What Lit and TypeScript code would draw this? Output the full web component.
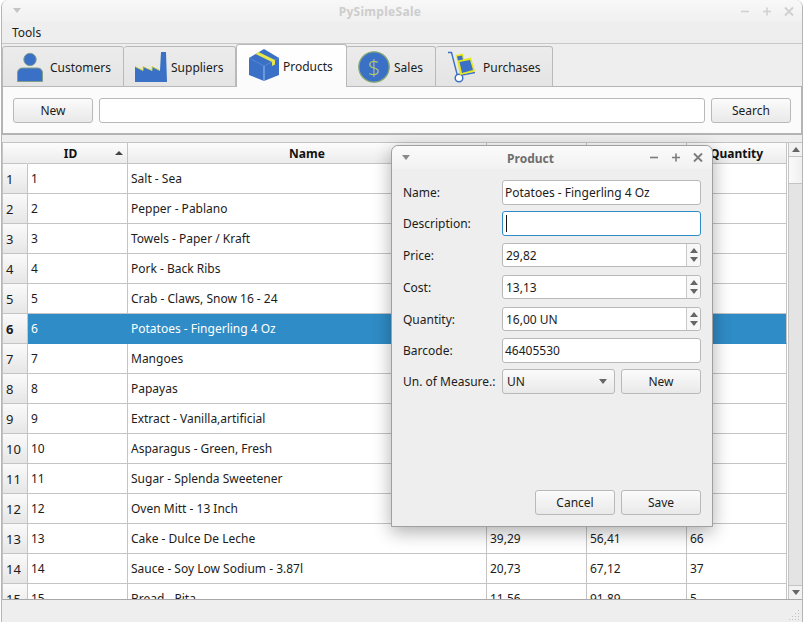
import { LitElement, html, css, svg } from "lit";
import { customElement } from "lit/decorators.js";

const names = [
  "Salt - Sea", "Pepper - Pablano", "Towels - Paper / Kraft", "Pork - Back Ribs",
  "Crab - Claws, Snow 16 - 24", "Potatoes - Fingerling 4 Oz", "Mangoes", "Papayas",
  "Extract - Vanilla,artificial", "Asparagus - Green, Fresh", "Sugar - Splenda Sweetener",
  "Oven Mitt - 13 Inch", "Cake - Dulce De Leche", "Sauce - Soy Low Sodium - 3.87l", "Bread - Pita",
];
const nums: Record<number, string[]> = {
  13: ["39,29", "56,41", "66"],
  14: ["20,73", "67,12", "37"],
  15: ["11,56", "91,89", "5"],
};

const icons = {
  customers: svg`<svg class="ic" width="32" height="32" viewBox="0 0 32 32">
    <circle cx="16" cy="8.5" r="6.2" fill="#3a70c6" stroke="#7f9f8a" stroke-width="1"/>
    <path d="M3.5 30.5V22c0-3 2-5 5-5h15c3 0 5 2 5 5v8.5z" fill="#3a70c6" stroke="#7f9f8a" stroke-width="1"/></svg>`,
  suppliers: svg`<svg class="ic" width="32" height="32" viewBox="0 0 32 32">
    <path d="M0 15.5L8 19.5V15.5L17 19.5V15.5L25 19.5L26 1H31L32 31H0z" fill="#3a70c6"/>
    <path d="M0 15.5L8 19.5V15.5L17 19.5V15.5L25 19.5" fill="none" stroke="#d6dc4a" stroke-width="1"/></svg>`,
  products: svg`<svg class="ic" width="32" height="32" viewBox="0 0 32 32">
    <path d="M16 0L31 9V26L16 32L1 26V9z" fill="#3a70c6"/>
    <path d="M16 17V32" stroke="#8fb2e6" stroke-width="1.2"/>
    <path d="M1 9L16 17L31 9" fill="none" stroke="#5f8ad6" stroke-width=".8"/>
    <path d="M7.5 5L10.5 3L27 11V15.5L24 17V13z" fill="#e7e64c"/></svg>`,
  sales: svg`<svg class="ic" width="32" height="32" viewBox="0 0 32 32">
    <circle cx="16" cy="16" r="15.2" fill="#3a70c6" stroke="#86a974" stroke-width="1.3"/>
    <text x="16" y="24" text-anchor="middle" font-family="Open Sans, sans-serif" font-size="22" font-weight="300" fill="#b8d45a">$</text></svg>`,
  purchases: svg`<svg class="ic" width="32" height="32" viewBox="0 0 32 32">
    <path d="M2 1.5H5.5L11.5 25L29 21.5" fill="none" stroke="#3a70c6" stroke-width="1.4"/>
    <circle cx="13" cy="27" r="3.8" fill="#fff" stroke="#3a70c6" stroke-width="1.5"/>
    <path d="M10 4L17 2.5L18 8L25 6.5L29 20.5L14 24z" fill="#e6e622"/>
    <path d="M11 5.5L16 4.5L17 8.5L12 9.5z" fill="#3a70c6"/>
    <path d="M13.5 11L24 9L27 19L16 22z" fill="#3a70c6"/></svg>`,
};

@customElement("app-root")
export class AppRoot extends LitElement {
  static styles = css`
    :host { display: block; width: 804px; height: 622px; overflow: hidden; background: #fff;
      font-family: "Noto Sans", sans-serif; font-size: 12px; color: #1c1c1c; }
    * { box-sizing: border-box; }
    .win { position: relative; width: 802px; height: 622px; margin-left: 1px; display: flex; flex-direction: column;
      background: #eeeeee; border-radius: 7px 7px 0 0; border-left: 1px solid #b4b4b4; border-right: 1px solid #b4b4b4; overflow: hidden; }
    .titlebar { flex: none; height: 22px; display: flex; align-items: center; padding: 0 5px 0 10px;
      background: linear-gradient(#f8f8f8, #f0f0f0); }
    .titlebar .t { flex: 1; text-align: center; font-weight: 700; color: #cdcdcd; letter-spacing: .3px; }
    .wbtns { display: flex; gap: 7px; align-items: center; }
    .wbtns svg { display: block; }
    .menu { flex: none; height: 22px; padding-left: 10px; display: flex; align-items: center; border-bottom: 1px solid #c8c8c8; }
    .tabs { flex: none; height: 42px; display: flex; align-items: flex-end; position: relative; z-index: 1; }
    .tab { flex: none; height: 41px; margin-bottom: -1px; display: flex; align-items: center; gap: 4px; padding-left: 11px;
      background: linear-gradient(#ececec, #e4e4e4); border: 1px solid #b9b9b9; border-left-width: 0; border-radius: 3px 3px 0 0; }
    .tab span { padding-top: 2px; }
    .tab:nth-child(1) { width: 122px; border-left-width: 1px; }
    .tab:nth-child(2) { width: 112px; }
    .tab.on { width: 111px; height: 43px; background: linear-gradient(#fff, #fbfbfb); border-bottom: none; border-left-width: 1px; position: relative; z-index: 1; gap: 3px; padding-bottom: 2px; }
    .tab:nth-child(4) { width: 90px; margin-left: -1px; padding-left: 12px; }
    .tab:nth-child(5) { width: 117px; padding-left: 10px; gap: 5px; }
    .ic { display: block; flex: none; }
    .panel { flex: none; width: 800px; height: 49px; background: #fbfbfb; border: 1px solid #b4b4b4; border-width: 1px 1px 2px 1px;
      display: flex; align-items: center; gap: 6px; padding: 0 10px; }
    .btn { flex: none; width: 80px; height: 25px; border: 1px solid #b9b9b9; border-radius: 3px; display: flex; align-items: center; justify-content: center;
      background: linear-gradient(#fbfbfb, #e9e9e9); }
    .input { background: #fff; border: 1px solid #b9b9b9; border-radius: 3px; height: 25px; display: flex; align-items: center; padding-left: 2px; }
    .search { flex: 1; }
    .table { flex: none; margin-top: 7px; width: 800px; height: 458px; display: flex; background: #fff; border: 1px solid #c4c4c4; border-bottom-color: #a8a8a8; border-right: none; overflow: hidden; }
    .grid { width: 785px; flex: none; overflow: hidden; }
    .row { display: grid; grid-template-columns: 25px 100px 359px 100px 100px 100px; height: 30px; }
    .row.head { height: 21px; font-weight: 700; }
    .row > div { border-right: 1px solid #c4c4c4; border-bottom: 1px solid #c4c4c4; display: flex; align-items: center; padding-left: 3px; white-space: nowrap; overflow: hidden; }
    .row.head > div { justify-content: center; padding: 0; background: linear-gradient(#fcfcfc, #ececec); position: relative; color: #111; }
    .row.head > div.corner { border-right-color: transparent; }
    .row.head > div.idh { padding-right: 14px; }
    .rh { background: linear-gradient(#fafafa, #e6e6e6); font-size: 13px; }
    .row.sel > div:not(.rh) { background: #308cc6; color: #fff; border-right-color: #308cc6; border-bottom-color: #308cc6; }
    .row.sel > div:last-child { border-right-color: #c4c4c4; }
    .row.sel .rh { font-weight: 700; }
    .sort { position: absolute; right: 4px; top: 8px; width: 0; height: 0; border-left: 4px solid transparent; border-right: 4px solid transparent; border-bottom: 4px solid #444; }
    .sb { flex: 1; display: flex; flex-direction: column; background: #e4e4e4; border-left: 1px solid #c4c4c4; }
    .sb .a { flex: none; height: 14px; display: flex; align-items: center; justify-content: center; background: #f2f2f2; border-bottom: 1px solid #c4c4c4; }
    .sb .th { flex: none; height: 27px; background: linear-gradient(90deg, #fafafa, #f0f0f0); border-bottom: 1px solid #c4c4c4; }
    .sb .sp { flex: 1; }
    .sb .a.d { border-bottom: none; border-top: 1px solid #c4c4c4; height: 14px; }
    .tri-u { width: 0; height: 0; border-left: 4px solid transparent; border-right: 4px solid transparent; border-bottom: 5px solid #666; }
    .tri-d { width: 0; height: 0; border-left: 4px solid transparent; border-right: 4px solid transparent; border-top: 5px solid #666; }
    .status { flex: 1; position: relative; }
    .grip { position: absolute; right: 1px; bottom: 1px; }
    .dialog { position: absolute; left: 389px; top: 145px; width: 322px; height: 382px; background: #eeeeee; border: 1px solid #a0a0a0; border-radius: 7px 7px 0 0;
      box-shadow: 0 5px 18px rgba(0,0,0,.32); display: flex; flex-direction: column; z-index: 5; }
    .dtitle { flex: none; height: 23px; display: flex; align-items: center; padding: 0 6px 0 9px; background: linear-gradient(#fafafa, #f2f2f2); border-radius: 7px 7px 0 0; }
    .dtitle .t { flex: 1; text-align: center; font-weight: 700; color: #6e6e6e; padding: 2px 0 0 3px; }
    .dbody { flex: 1; display: flex; flex-direction: column; padding: 11px; }
    .form { display: grid; grid-template-columns: 99px 199px; row-gap: 6px; align-items: center; }
    .focus { border-color: #308cc6; }
    .caret { width: 1px; height: 17px; background: #111; margin-left: 1px; }
    .form .spin { height: 24px; margin: 1px 0; padding: 0; }
    .spin span { flex: 1; padding-left: 3px; }
    .arrows { flex: none; width: 14px; height: 22px; border-left: 1px solid #c8c8c8; display: flex; flex-direction: column; align-items: center; justify-content: center; gap: 4px; background: #f7f7f7; border-radius: 0 3px 3px 0; }
    .arrows i { display: block; }
    .lastrow { display: flex; gap: 6px; }
    .combo { width: 113px; height: 25px; border: 1px solid #b9b9b9; border-radius: 3px; background: linear-gradient(#fbfbfb, #e9e9e9); display: flex; align-items: center; justify-content: space-between; padding: 0 7px 0 4px; }
    .foot { margin-top: auto; display: flex; justify-content: flex-end; gap: 6px; }
  `;

  private glyphBtns(color: string) {
    return html`<div class="wbtns">
      <svg width="15" height="15" viewBox="0 0 15 15"><path d="M3 7.5h8" stroke=${color} stroke-width="1.6"/></svg>
      <svg width="15" height="15" viewBox="0 0 15 15"><path d="M3 7.5h8M7 3.5v8" stroke=${color} stroke-width="1.6"/></svg>
      <svg width="15" height="15" viewBox="0 0 15 15"><path d="M3 3.5l8 8M11 3.5l-8 8" stroke=${color} stroke-width="1.8"/></svg>
    </div>`;
  }

  private menuTri(color: string) {
    return html`<svg width="10" height="6" viewBox="0 0 10 6"><path d="M1 0h8L5 5z" fill=${color}/></svg>`;
  }

  private spin(v: string) {
    return html`<div class="input spin"><span>${v}</span><div class="arrows"><i class="tri-u"></i><i class="tri-d"></i></div></div>`;
  }

  render() {
    return html`<div class="win">
      <div class="titlebar">${this.menuTri("#c4c4c4")}<div class="t">PySimpleSale</div>${this.glyphBtns("#d0d0d0")}</div>
      <div class="menu">Tools</div>
      <div class="tabs">
        <div class="tab">${icons.customers}<span>Customers</span></div>
        <div class="tab">${icons.suppliers}<span>Suppliers</span></div>
        <div class="tab on">${icons.products}<span>Products</span></div>
        <div class="tab">${icons.sales}<span>Sales</span></div>
        <div class="tab">${icons.purchases}<span>Purchases</span></div>
      </div>
      <div class="panel">
        <div class="btn">New</div>
        <div class="input search"></div>
        <div class="btn">Search</div>
      </div>
      <div class="table">
        <div class="grid">
          <div class="row head"><div class="corner"></div><div class="idh">ID<i class="sort"></i></div><div>Name</div><div></div><div></div><div>Quantity</div></div>
          ${names.map((n, i) => {
            const id = i + 1;
            const v = nums[id] ?? ["", "", ""];
            return html`<div class="row ${id === 6 ? "sel" : ""}">
              <div class="rh">${id}</div><div>${id}</div><div>${n}</div><div>${v[0]}</div><div>${v[1]}</div><div>${v[2]}</div>
            </div>`;
          })}
        </div>
        <div class="sb">
          <div class="a"><i class="tri-u"></i></div>
          <div class="th"></div>
          <div class="sp"></div>
          <div class="a d"><i class="tri-d"></i></div>
        </div>
      </div>
      <div class="status">
        <svg class="grip" width="12" height="12" viewBox="0 0 12 12" fill="#c0c0c0"><rect x="9" y="1" width="1" height="1"/><rect x="6" y="4" width="1" height="1"/><rect x="9" y="4" width="1" height="1"/><rect x="3" y="7" width="1" height="1"/><rect x="6" y="7" width="1" height="1"/><rect x="9" y="7" width="1" height="1"/><rect x="0" y="10" width="1" height="1"/><rect x="3" y="10" width="1" height="1"/><rect x="6" y="10" width="1" height="1"/><rect x="9" y="10" width="1" height="1"/></svg>
      </div>
      <div class="dialog">
        <div class="dtitle">${this.menuTri("#8a8a8a")}<div class="t">Product</div>${this.glyphBtns("#7c7c7c")}</div>
        <div class="dbody">
          <div class="form">
            <div>Name:</div><div class="input">Potatoes - Fingerling 4 Oz</div>
            <div>Description:</div><div class="input focus"><i class="caret"></i></div>
            <div>Price:</div>${this.spin("29,82")}
            <div>Cost:</div>${this.spin("13,13")}
            <div>Quantity:</div>${this.spin("16,00 UN")}
            <div>Barcode:</div><div class="input">46405530</div>
            <div>Un. of Measure.:</div>
            <div class="lastrow"><div class="combo">UN<i class="tri-d"></i></div><div class="btn">New</div></div>
          </div>
          <div class="foot"><div class="btn">Cancel</div><div class="btn">Save</div></div>
        </div>
      </div>
    </div>`;
  }
}
